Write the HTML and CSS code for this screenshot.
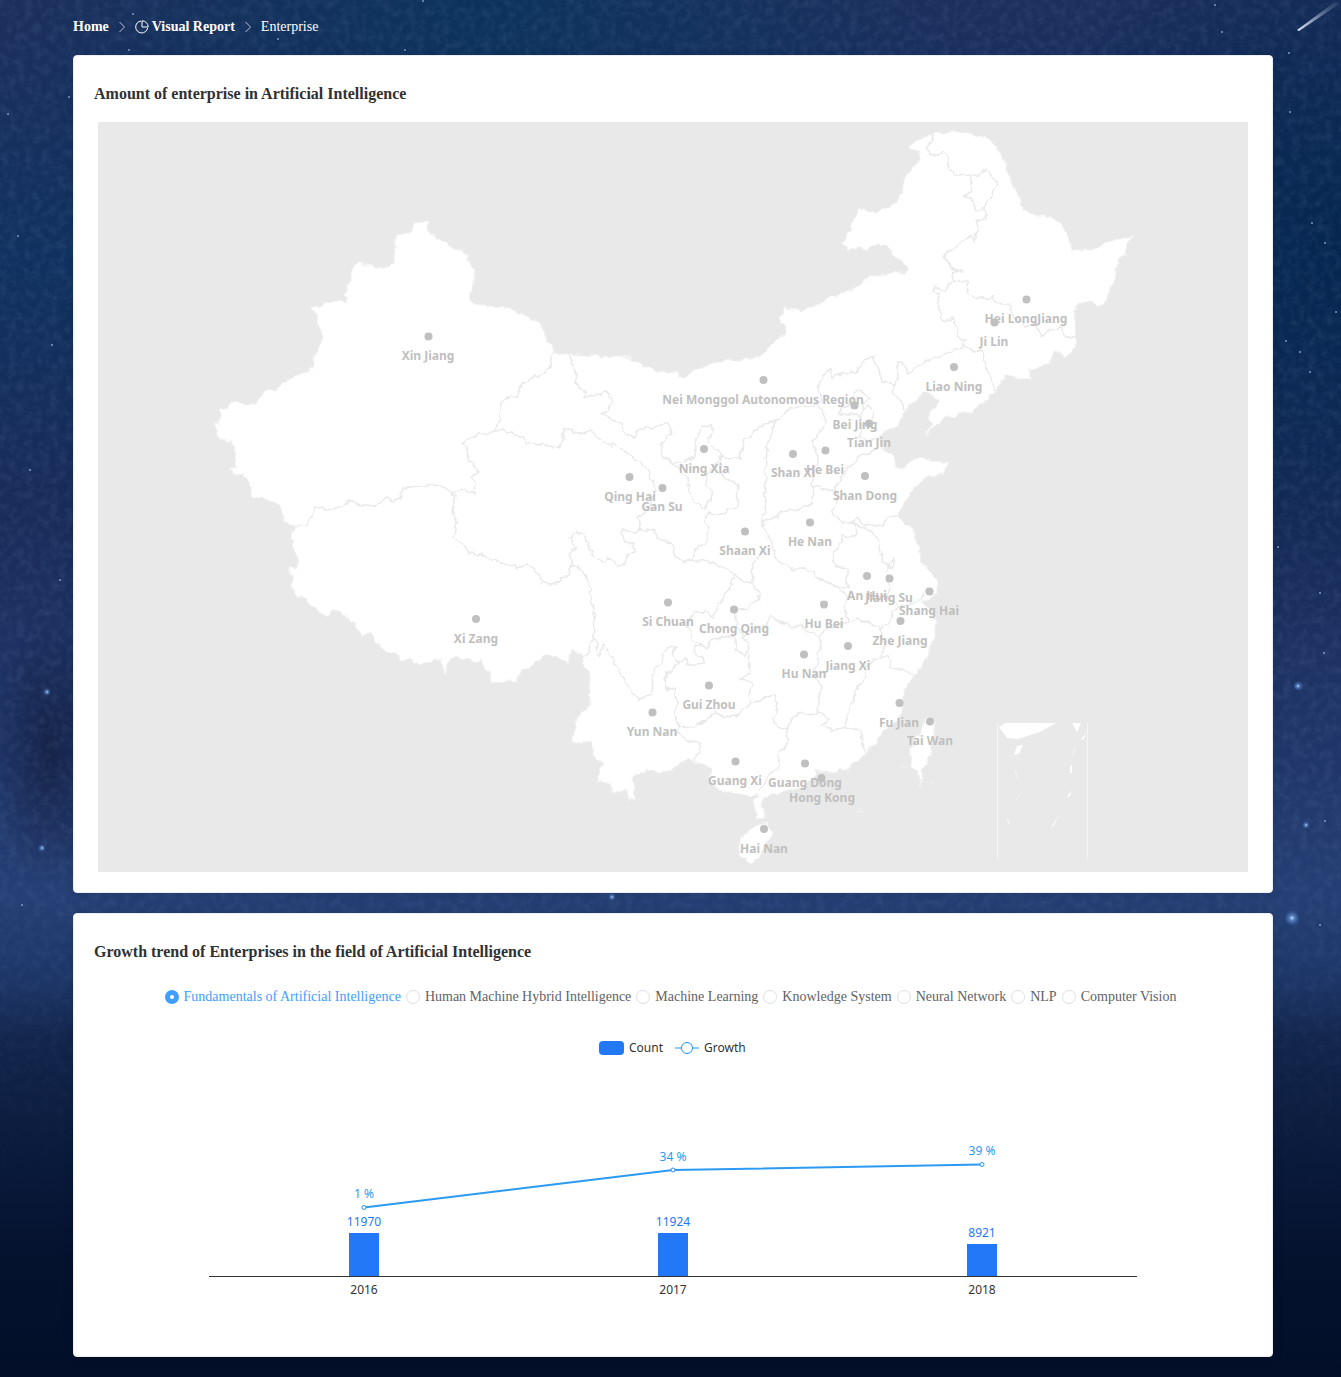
FILE: index.html
```html
<!DOCTYPE html>
<html lang="en">
<head>
<meta charset="utf-8">
<meta name="viewport" content="width=device-width, initial-scale=1">
<title>Enterprise</title>
<link rel="stylesheet" href="styles.css">
</head>
<body>
<svg class="sky" viewBox="0 0 1341 1377" preserveAspectRatio="xMidYMid slice" aria-hidden="true">
  <defs>
    <filter id="dust" x="0" y="0" width="100%" height="100%">
      <feTurbulence type="fractalNoise" baseFrequency="0.12" numOctaves="4" seed="4"/>
      <feColorMatrix values="0 0 0 0 0.3  0 0 0 0 0.45  0 0 0 0 0.7  0.9 0 0 0 -0.34"/>
    </filter>
    <linearGradient id="fade" x1="0" y1="0" x2="0" y2="1"><stop offset=".7" stop-color="#fff"/><stop offset="1" stop-color="#000"/></linearGradient>
    <mask id="upper"><rect width="1341" height="1200" fill="url(#fade)"/></mask>
    <radialGradient id="glow"><stop offset="0" stop-color="#cfe6ff"/><stop offset=".3" stop-color="#6fa0e0" stop-opacity=".7"/><stop offset="1" stop-color="#4070c0" stop-opacity="0"/></radialGradient>
    <linearGradient id="tail" x1="0" y1="1" x2="1" y2="0"><stop offset="0" stop-color="#e8eef8"/><stop offset="1" stop-color="#8ea6c8" stop-opacity="0"/></linearGradient>
  </defs>
  <g mask="url(#upper)"><rect width="1341" height="1200" filter="url(#dust)" opacity=".25"/></g>
  <path d="M1297 30L1299 31L1338 5L1341 0L1332 4Z" fill="url(#tail)"/>
  <g fill="url(#glow)"><circle cx="1292" cy="918" r="8"/><circle cx="1298" cy="686" r="5"/><circle cx="1306" cy="825" r="4"/><circle cx="612" cy="897" r="4"/><circle cx="47" cy="692" r="4"/><circle cx="42" cy="848" r="4"/></g>
  <g fill="#7f9cc4"><circle cx="133" cy="14" r="1"/><circle cx="278" cy="39" r="1"/><circle cx="405" cy="50" r="1"/><circle cx="423" cy="1" r="1"/><circle cx="129" cy="50" r="1"/><circle cx="1222" cy="32" r="1"/><circle cx="1215" cy="5" r="1"/><circle cx="1289" cy="53" r="1"/><circle cx="1290" cy="112" r="1"/><circle cx="1312" cy="223" r="1"/><circle cx="1325" cy="243" r="1"/><circle cx="1336" cy="312" r="1"/><circle cx="1286" cy="341" r="1"/><circle cx="1300" cy="352" r="1"/><circle cx="1310" cy="372" r="1"/><circle cx="1278" cy="547" r="1"/><circle cx="1320" cy="593" r="1"/><circle cx="1324" cy="653" r="1"/><circle cx="1325" cy="821" r="1"/><circle cx="1320" cy="925" r="1"/><circle cx="8" cy="114" r="1"/><circle cx="69" cy="97" r="1"/><circle cx="18" cy="236" r="1"/><circle cx="52" cy="345" r="1"/><circle cx="30" cy="470" r="1"/><circle cx="60" cy="580" r="1"/><circle cx="22" cy="905" r="1"/></g>
</svg>

<main class="page">
  <nav class="crumbs" aria-label="Breadcrumb">
    <a href="#">Home</a>
    <svg class="icon arrow" viewBox="0 0 14 14"><path d="M4.500 2l5 5-5 5"/></svg>
    <a href="#"><svg class="icon" viewBox="0 0 14 14"><path d="M12.600 8A6 6 0 1 1 6 1M7 .8V7H13.200A6.200 6.200 0 0 0 7 .8Z"/></svg> Visual Report</a>
    <svg class="icon arrow" viewBox="0 0 14 14"><path d="M4.500 2l5 5-5 5"/></svg>
    <span>Enterprise</span>
  </nav>

  <section class="card">
    <h3>Amount of enterprise in Artificial Intelligence</h3>
    <svg class="map" viewBox="98 122 1150 750" role="img" aria-label="Map of enterprises by province">
      <defs><filter id="coast" filterUnits="userSpaceOnUse" x="98" y="122" width="1150" height="750"><feTurbulence type="fractalNoise" baseFrequency="0.12" numOctaves="2" seed="7"/><feDisplacementMap in="SourceGraphic" scale="7" xChannelSelector="R" yChannelSelector="G"/></filter></defs>
      <g class="land" filter="url(#coast)">
        <path d="M214 425L220 440 232 441 234 448 237 467 228 471 243 475 250 483 252 495 262 498 280 504 285 522 295 527 292 533 293 545 299 562 295 569 288 566 292 578 293 590 297 597 302 597 312 605 328 617 332 610 342 613 363 635 372 633 375 642 387 652 395 653 401 660 409 659 417 663 442 659 444 675 448 662 457 656 473 661 482 660 485 670 490 672 491 683 515 681 523 670 537 662 547 654 558 657 567 663 572 650 582 654 584 667 589 670 590 705 576 718 573 743 592 741 595 760 602 763 597 781 608 783 612 793 625 790 628 799 635 799 633 777 647 769 660 773 672 769 688 758 697 763 710 767 712 783 720 791 752 797 757 793 754 807 757 819 765 818 762 807 763 798 777 793 800 787 817 775 813 770 823 773 847 768 860 760 865 752 877 743 883 730 895 723 902 712 903 690 915 675 927 657 933 640 937 620 922 602 937 593 937 580 922 563 913 530 897 517 912 490 927 477 945 473 947 465 920 457 902 469 893 467 895 455 883 450 877 437 887 430 897 428 903 412 913 403 925 392 940 400 928 418 933 423 925 435 943 418 970 413 993 393 1008 375 1030 380 1030 370 1050 363 1055 350 1065 357 1075 347 1076 320 1072 310 1085 302 1103 305 1115 280 1118 258 1125 255 1127 243 1133 236 1113 240 1093 250 1072 250 1065 228 1050 217 1023 212 1020 198 1010 180 1003 157 990 140 958 131 935 134 920 137 909 148 919 151 918 162 908 173 897 202 875 213 859 208 843 243 847 250 860 247 868 251 877 244 887 246 907 267 905 273 890 273 870 277 852 290 827 300 813 306 800 310 785 308 780 317 786 328 785 334 777 340 760 357 740 360 720 361 700 368 683 377 677 373 660 372 642 365 635 360 620 356 603 357 568 354 555 353 547 342 540 323 510 308 473 304 469 297 474 285 474 272 465 253 447 245 428 230 427 222 413 223 412 232 397 237 394 248 396 262 384 268 367 266 356 262 345 295 348 303 336 301 311 308 317 315 322 338 322 347 315 353 313 368 282 383 275 391 265 390 257 403 245 404 235 402 220 412 219 422Z"/>
        <path d="M927 718L935 720 933 737 930 757 922 770 920 786 918 775 911 763 910 752 917 737ZM742 837L753 827 768 824 773 832 763 847 760 857 752 863 739 855 739 843Z"/>
        <g class="borders">
          <path d="M555 353L551 358 550 367 538 378 535 375 522 385 516 397 503 399 499 420 495 431 505 428 507 433 523 437 528 444 543 445 553 449 559 446 564 439 564 428 580 435 590 430 610 447 612 443 630 456 642 463 649 473 655 490 650 507 638 518 642 530 635 533 623 528 621 532 625 542 633 543 635 550 627 555 626 563 618 565 607 558 603 563 592 553 585 535 577 531 570 538 575 548 570 557 572 565"/>
          <path d="M495 431L468 438 462 443 467 447 468 458 478 472 471 478 476 483 475 493 460 489 455 493 435 484 420 486 403 490 400 498 393 501 387 498 373 507 356 505 348 500 342 506 333 510 315 507 307 525 295 527"/>
          <path d="M455 493L451 494 456 497 452 510 457 522 455 537 470 553 480 554 493 561 517 567 528 564 540 575 542 583 552 584 560 582 562 577 568 576 571 565 582 569 592 590 588 593 593 603 594 640 590 642 589 655 582 657"/>
          <path d="M595 640L599 657 603 643 612 657 620 672 632 693 638 700 653 694 652 677 668 647 675 647 673 657 678 663 667 673 664 678 666 690 675 688 677 703 675 713 680 727 678 733 692 742 700 743 700 752 693 760"/>
          <path d="M678 663L687 658 688 665 703 663 702 657 693 653 695 647 707 648 710 642 722 637 734 638 737 650 743 657 747 650"/>
          <path d="M735 574L730 587 720 603 713 617 707 612 693 612 688 627 695 642 707 648M735 574L745 582 753 583 760 593 758 600 747 608 735 610 737 627 745 638 747 643 750 673 742 678 752 683 749 695 752 703"/>
          <path d="M680 727L693 728 710 717 715 712 725 718 740 713 752 703 760 700 773 695 778 703 773 722 782 728 788 727 787 743 780 753 778 768 770 775 760 790"/>
          <path d="M642 530L652 530 660 540 672 542 675 557 682 563 693 559 713 563 733 573 735 574M693 559L695 550 706 543 708 528 705 522 707 513 723 515 727 510 737 508 738 485 718 472 722 457"/>
          <path d="M672 464L695 457 697 437 703 426 712 427 708 443 717 450 722 457 707 475 705 483 712 492 710 500 705 508 693 500 689 490 687 477 678 467Z"/>
          <path d="M568 354L577 377 574 382 585 392 585 398 593 395 607 392 612 398 608 410 602 413 622 425 623 432 634 438 638 430 647 427 653 429 667 422 672 430 660 445 661 453 672 464M722 457L740 459 743 443 760 425 775 422 767 450 765 473 766 500 763 523 773 547 775 557 790 568 813 570 815 578 827 582 840 588"/>
          <path d="M775 422L792 407 818 405 822 402 818 383 822 377 830 368 832 378 843 373 857 372 862 362 873 357 880 370 882 382 896 384 898 373 898 363 903 363 908 374 923 362 947 353 963 347 965 340 959 338 953 318 943 323 939 310 938 293 933 292 935 286 945 292 950 283 954 281"/>
          <path d="M818 405L826 420 825 428 813 440 818 457 812 483 813 487 812 503 803 509 788 510 763 523M813 487L835 491 840 497 832 513 842 523 852 523 857 517 865 525 883 526 888 517 897 517"/>
          <path d="M896 384L892 392 902 402 904 410M963 342L975 352 982 350 987 367 993 383 993 393M954 281L967 281 968 293 975 298 992 298 998 303 1010 303 1013 317 1025 326 1035 323 1042 337 1048 331 1062 328 1065 336 1076 339"/>
          <path d="M954 281L953 273 962 270 953 270 944 258 948 252 972 234 974 242 978 220 985 219 985 207 998 183 986 170 979 175 953 176 948 165 948 157 942 153 935 156 926 150 933 140 932 135M972 176L970 192 964 196 972 199 976 211 985 207"/>
          <path d="M857 390L870 398 862 405 862 415 850 415 840 415 841 408 850 405 852 395ZM862 410L868 405 873 412 873 427 878 430M862 415L860 437 868 442 875 437M875 448L870 455 858 457 847 470 838 483 835 491"/>
          <path d="M852 523L857 533 855 538 843 535 842 543 833 555 835 565 847 570 847 588 838 588 848 597 845 610 848 622M852 523L870 530 878 540 880 553 887 567 895 558 893 567 887 567 888 583 890 600 898 607 920 602 927 588"/>
          <path d="M763 550L752 567 753 582M745 638L757 627 767 625 770 617 790 627 802 625 808 632 818 635 830 628 848 622 858 618 870 623 880 630 892 617 892 612 898 607M818 635L821 642 818 660 815 673 820 685 818 713"/>
          <path d="M788 727L792 718 802 713 812 715 818 713 828 717 822 727 833 731 845 728 848 713 855 693 865 677 865 667 873 660 883 657 884 643 880 630M845 728L860 730 862 745 865 752M883 657L888 655 890 668 903 668 913 675"/>
        </g>
      </g>
      <g class="inset">
        <path d="M999 727L1005 723H1056L1040 732 1018 739 1007 738ZM1072 723H1081L1077 732ZM1017 746L1023 745 1019 754 1014 755ZM1070 766V773H1072V765ZM1067 797L1072 790 1070 796ZM1051 827L1059 815 1054 825ZM1007 817L1010 825 1008 823ZM1081 740L1086 732 1084 739ZM1016 800L1021 793"/>
        <path class="edge" d="M997.500 723V859M1087.500 723V859M1015 770L1018 779M1016 800L1021 793M1072 755L1076 748M958 706V708M901 765L905 768M931 781L935 785M857 811L862 812 860 808"/>
      </g>
      <g class="dots"><circle cx="428.500" cy="336.500" r="4"/><circle cx="763.500" cy="380" r="4"/><circle cx="1026.500" cy="299.500" r="4"/><circle cx="994.500" cy="322.500" r="4"/><circle cx="954" cy="367" r="4"/><circle cx="854.500" cy="405.500" r="4"/><circle cx="869" cy="423.500" r="4"/><circle cx="793" cy="454" r="4"/><circle cx="825.500" cy="450.500" r="4"/><circle cx="704" cy="449" r="4"/><circle cx="629.500" cy="477" r="4"/><circle cx="662.500" cy="488" r="4"/><circle cx="865" cy="476" r="4"/><circle cx="745" cy="531.500" r="4"/><circle cx="810" cy="522.500" r="4"/><circle cx="867" cy="576" r="4"/><circle cx="889.500" cy="578.500" r="4"/><circle cx="929.500" cy="591.500" r="4"/><circle cx="900.500" cy="621" r="4"/><circle cx="668" cy="602.500" r="4"/><circle cx="734" cy="609.500" r="4"/><circle cx="824" cy="604.500" r="4"/><circle cx="476" cy="619" r="4"/><circle cx="804" cy="654.500" r="4"/><circle cx="848" cy="646" r="4"/><circle cx="709" cy="685.500" r="4"/><circle cx="652.500" cy="712.500" r="4"/><circle cx="899.500" cy="703" r="4"/><circle cx="930" cy="721.500" r="4"/><circle cx="735.500" cy="761.500" r="4"/><circle cx="805" cy="763.500" r="4"/><circle cx="821.500" cy="778" r="4"/><circle cx="764" cy="829" r="4"/></g>
      <g class="names"><text x="428" y="360">Xin Jiang</text><text x="763" y="404">Nei Monggol Autonomous Region</text><text x="1026" y="323">Hei LongJiang</text><text x="994" y="346">Ji Lin</text><text x="954" y="391">Liao Ning</text><text x="855" y="429">Bei Jing</text><text x="869" y="447">Tian Jin</text><text x="793" y="477">Shan Xi</text><text x="825" y="474">He Bei</text><text x="704" y="473">Ning Xia</text><text x="630" y="501">Qing Hai</text><text x="662" y="511">Gan Su</text><text x="865" y="500">Shan Dong</text><text x="745" y="555">Shaan Xi</text><text x="810" y="546">He Nan</text><text x="867" y="600">An Hui</text><text x="889" y="602">Jiang Su</text><text x="929" y="615">Shang Hai</text><text x="900" y="645">Zhe Jiang</text><text x="668" y="626">Si Chuan</text><text x="734" y="633">Chong Qing</text><text x="824" y="628">Hu Bei</text><text x="476" y="643">Xi Zang</text><text x="804" y="678">Hu Nan</text><text x="848" y="670">Jiang Xi</text><text x="709" y="709">Gui Zhou</text><text x="652" y="736">Yun Nan</text><text x="899" y="727">Fu Jian</text><text x="930" y="745">Tai Wan</text><text x="735" y="785">Guang Xi</text><text x="805" y="787">Guang Dong</text><text x="822" y="802">Hong Kong</text><text x="764" y="853">Hai Nan</text></g>
    </svg>
  </section>

  <section class="card">
    <h3>Growth trend of Enterprises in the field of Artificial Intelligence</h3>
    <form class="fields">
      <label><input type="radio" name="field" checked><span>Fundamentals of Artificial Intelligence</span></label>
      <label><input type="radio" name="field"><span>Human Machine Hybrid Intelligence</span></label>
      <label><input type="radio" name="field"><span>Machine Learning</span></label>
      <label><input type="radio" name="field"><span>Knowledge System</span></label>
      <label><input type="radio" name="field"><span>Neural Network</span></label>
      <label><input type="radio" name="field"><span>NLP</span></label>
      <label><input type="radio" name="field"><span>Computer Vision</span></label>
    </form>
    <svg class="chart" viewBox="94 1028 1158 308" role="img" aria-label="Enterprise count and growth by year">
      <rect class="bar" x="599" y="1041" width="25" height="14" rx="4"/>
      <text class="legend" x="629" y="1052">Count</text>
      <path class="key" d="M675 1048H699"/><circle class="ring" cx="687" cy="1048" r="5.500"/>
      <text class="legend" x="704" y="1052">Growth</text>
      <g class="bar"><rect x="349" y="1233" width="30" height="43"/><rect x="658" y="1233" width="30" height="43"/><rect x="967" y="1244" width="30" height="32"/></g>
      <path class="axis" d="M209 1276.500H1137"/>
      <path class="line" d="M364 1207.500L673 1170 982 1164.500"/>
      <g class="points"><circle cx="364" cy="1207.500" r="2"/><circle cx="673" cy="1170" r="2"/><circle cx="982" cy="1164.500" r="2"/></g>
      <g class="rate"><text x="364" y="1198">1 %</text><text x="673" y="1161">34 %</text><text x="982" y="1155">39 %</text></g>
      <g class="count"><text x="364" y="1226">11970</text><text x="673" y="1226">11924</text><text x="982" y="1237">8921</text></g>
      <g class="year"><text x="364" y="1294">2016</text><text x="673" y="1294">2017</text><text x="982" y="1294">2018</text></g>
    </svg>
  </section>
</main>
</body>
</html>
```
FILE: styles.css
```css
* { box-sizing: border-box; }

html { background: #030f29; }

body {
  position: relative;
  margin: 0;
  font: 14px/18px "Liberation Serif", "Times New Roman", serif;
  color: #303133;
  background:
    radial-gradient(ellipse 60px 130px at 50px 750px, rgba(14, 22, 50, .6), transparent),
    radial-gradient(ellipse 480px 300px at 480px 0, rgba(8, 52, 92, .8), transparent),
    radial-gradient(ellipse 300px 420px at 1341px 240px, rgba(3, 36, 76, .8), transparent),
    linear-gradient(#1d2f5d 0, #10315f 260px, #1a2c5a 520px, #20366a 760px, #253f74 900px, #1d3668 980px, #13254b 1040px, #0a1a3b 1160px, #04122e 1260px, #030f29 100%);
}

.sky {
  position: absolute;
  inset: 0;
  width: 100%;
  height: 100%;
}

.page {
  position: relative;
  display: grid;
  grid-template-columns: minmax(0, 1fr);
  gap: 20px;
  padding: 19px 68px 20px 73px;
}

.crumbs {
  display: flex;
  align-items: center;
  gap: 6px;
  height: 16px;
  color: #fff;
}
.crumbs a { display: flex; align-items: center; gap: 3px; color: #fff; font-weight: 700; text-decoration: none; }
.icon { width: 14px; height: 14px; fill: none; stroke: #fff; stroke-width: 1; }
.arrow { stroke: #c0c4cc; }

.card {
  padding: 20px;
  border: 1px solid #ebeef5;
  border-radius: 4px;
  background: #fff;
  box-shadow: 0 2px 12px rgba(0, 0, 0, .1);
}
.card h3 { margin: 9px 0 19px; font-size: 16px; line-height: 18px; }

.map { display: block; width: calc(100% - 8px); margin: 0 auto; background: #e9e9e9; }
.land { fill: #fff; stroke: #f3f3f3; stroke-width: 1; stroke-linejoin: round; }
.borders { fill: none; stroke: #e9e9e9; stroke-width: 1.5; }
.inset { fill: #fff; }
.edge { fill: none; stroke: #f5f5f5; }
.dots { fill: #c0c0c0; }
.names, .chart text { font-family: "Noto Sans", "Open Sans", sans-serif; font-size: 12px; }
.names { font-weight: 700; fill: #bfbfbf; text-anchor: middle; }

.fields { display: flex; justify-content: center; flex-wrap: wrap; gap: 5px; margin: 27px 5px 22px 0; }
.fields label { display: flex; align-items: center; gap: 5px; color: #606266; }
.fields input {
  appearance: none;
  width: 14px;
  height: 14px;
  margin: 0;
  border: 1px solid #dcdfe6;
  border-radius: 50%;
  background: #fff;
}
.fields input:checked { border: 5px solid #409eff; }
.fields input:checked + span { color: #409eff; }

.chart { display: block; width: 100%; }
.chart .legend { fill: #333; }
.bar { fill: #2378f7; }
.key { stroke: #8cc8f8; stroke-width: 2; }
.ring { fill: #fff; stroke: #2196f3; }
.axis { stroke: #333; }
.line { fill: none; stroke: #2b9af3; stroke-width: 2; }
.points { fill: #fff; stroke: #2196f3; }
.rate, .count, .year { text-anchor: middle; }
.rate { fill: #2b9af3; }
.count { fill: #2378f7; }
.year { fill: #333; }
```
